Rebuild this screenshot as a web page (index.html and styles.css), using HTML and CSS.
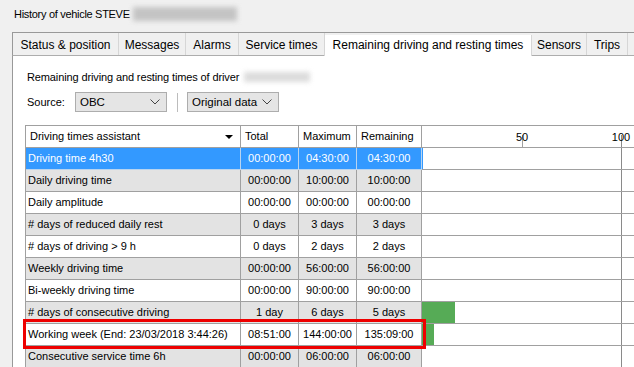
FILE: index.html
```html
<!DOCTYPE html>
<html>
<head>
<meta charset="utf-8">
<link rel="stylesheet" href="styles.css">
</head>
<body>
<div class="title">History of vehicle STEVE<span class="blur blur-title"></span></div>
<div class="tabctl">
  <div class="tabs">
    <div class="tab t1">Status &amp; position</div>
    <div class="tab t2">Messages</div>
    <div class="tab t3">Alarms</div>
    <div class="tab t4">Service times</div>
    <div class="tab t5 active">Remaining driving and resting times</div>
    <div class="tab t6">Sensors</div>
    <div class="tab t7">Trips</div>
  </div>
  <div class="panel">
    <div class="label">Remaining driving and resting times of driver<span class="blur blur-driver"></span></div>
    <div class="source-row">
      <span class="src-label">Source:</span>
      <div class="combo c1"><span>OBC</span><svg width="10" height="6" viewBox="0 0 10 6"><polyline points="0.5,0.5 5,5 9.5,0.5" fill="none" stroke="#444" stroke-width="1"/></svg></div>
      <div class="vsep"></div>
      <div class="combo c2"><span>Original data</span><svg width="10" height="6" viewBox="0 0 10 6"><polyline points="0.5,0.5 5,5 9.5,0.5" fill="none" stroke="#444" stroke-width="1"/></svg></div>
    </div>
    <div class="grid">
      <div class="c hd first">Driving times assistant<span class="tri"></span></div>
      <div class="c hd">Total</div>
      <div class="c hd">Maximum</div>
      <div class="c hd">Remaining</div>
      <div class="c hd chart-h"><span class="axl" style="left:100px">50</span><span class="axl" style="left:199px">100</span></div>

      <div class="c first sel">Driving time 4h30</div><div class="c num sel">00:00:00</div><div class="c num sel">04:30:00</div><div class="c num sel">04:30:00</div><div class="c chart selb"></div>

      <div class="c first g">Daily driving time</div><div class="c num g">00:00:00</div><div class="c num g">10:00:00</div><div class="c num g">10:00:00</div><div class="c chart"></div>

      <div class="c first">Daily amplitude</div><div class="c num">00:00:00</div><div class="c num">00:00:00</div><div class="c num">00:00:00</div><div class="c chart"></div>

      <div class="c first g"># days of reduced daily rest</div><div class="c num g">0 days</div><div class="c num g">3 days</div><div class="c num g">3 days</div><div class="c chart"></div>

      <div class="c first"># days of driving &gt; 9 h</div><div class="c num">0 days</div><div class="c num">2 days</div><div class="c num">2 days</div><div class="c chart"></div>

      <div class="c first g">Weekly driving time</div><div class="c num g">00:00:00</div><div class="c num g">56:00:00</div><div class="c num g">56:00:00</div><div class="c chart"></div>

      <div class="c first">Bi-weekly driving time</div><div class="c num">00:00:00</div><div class="c num">90:00:00</div><div class="c num">90:00:00</div><div class="c chart"></div>

      <div class="c first g"># days of consecutive driving</div><div class="c num g">1 day</div><div class="c num g">6 days</div><div class="c num g">5 days</div><div class="c chart"><div class="bar" style="width:33px"></div></div>

      <div class="c first">Working week (End: 23/03/2018 3:44:26)</div><div class="c num">08:51:00</div><div class="c num">144:00:00</div><div class="c num">135:09:00</div><div class="c chart"><div class="bar" style="width:12px"></div></div>

      <div class="c first g">Consecutive service time 6h</div><div class="c num g">00:00:00</div><div class="c num g">06:00:00</div><div class="c num g">06:00:00</div><div class="c chart"></div>

      <div class="highlight"></div>
    </div>
  </div>
</div>
</body>
</html>
```

FILE: styles.css
```css
html, body {
  margin: 0;
  padding: 0;
  width: 634px;
  height: 367px;
  overflow: hidden;
  background: #f0f0f0;
  font-family: "Liberation Sans", Arial, sans-serif;
  color: #000;
}

.title {
  height: 32px;
  box-sizing: border-box;
  padding: 6px 0 0 14px;
  font-size: 11px;
  letter-spacing: -0.3px;
  line-height: 16px;
  display: flex;
  align-items: flex-start;
}

.blur {
  display: inline-block;
  filter: blur(2.5px);
}

.blur-title {
  width: 104px;
  height: 14px;
  margin: 1px 0 0 3px;
  background: #c4c4c4;
}

.blur-driver {
  width: 66px;
  height: 10px;
  margin: 3px 0 0 5px;
  background: #dcdcdc;
}

.tabctl {
  margin-left: 12px;
  display: flex;
  flex-direction: column;
  height: 335px;
}

.tabs {
  display: flex;
  height: 24px;
  box-sizing: border-box;
  border-top: 1px solid #999;
  border-left: 1px solid #999;
  border-bottom: 1px solid #adadad;
  font-size: 12px;
}

.tab {
  box-sizing: border-box;
  height: 22px;
  padding-top: 3px;
  line-height: 19px;
  text-align: center;
  border-right: 1px solid #d6d6d6;
  background: #f0f0f0;
  white-space: nowrap;
}

.tab.active {
  background: #fff;
  margin-top: 2px;
  height: 21px;
  padding-top: 1px;
  border-left: 1px solid #d6d6d6;
  margin-left: -1px;
  position: relative;
}

.tab.active::after {
  content: "";
  position: absolute;
  left: 0;
  right: 0;
  bottom: -1px;
  height: 1px;
  background: #fff;
}

.t1 { width: 106px; }
.t2 { width: 67px; }
.t3 { width: 53px; }
.t4 { width: 86px; }
.t5 { width: 208px; }
.t6 { width: 55px; }
.t7 { width: 41px; }

.panel {
  flex: 1;
  background: #fff;
  border-left: 1px solid #999;
  padding: 13px 0 0 12px;
  font-size: 11px;
}

.label {
  height: 16px;
  line-height: 16px;
  padding-left: 2px;
  letter-spacing: -0.12px;
  display: flex;
  align-items: flex-start;
}

.source-row {
  margin-top: 7px;
  height: 20px;
  display: flex;
  align-items: center;
  padding-left: 2px;
}

.src-label {
  width: 48px;
}

.combo {
  box-sizing: border-box;
  height: 20px;
  width: 92px;
  background: #e5e5e5;
  border: 1px solid #adadad;
  display: flex;
  align-items: center;
  justify-content: space-between;
  padding: 0 6px 0 4px;
  font-size: 11.5px;
}

.vsep {
  width: 1px;
  height: 19px;
  background: #bcbcbc;
  margin: 0 9px 0 10px;
}

.grid {
  position: relative;
  margin-top: 13px;
  display: grid;
  grid-template-columns: 215px 58px 58px 65px 220px;
  grid-auto-rows: 22px;
  border-left: 1px solid #a0a0a0;
  border-top: 1px solid #a0a0a0;
  width: 616px;
}

.c {
  box-sizing: border-box;
  border-right: 1px solid #a0a0a0;
  border-bottom: 1px solid #a0a0a0;
  line-height: 21px;
  white-space: nowrap;
  overflow: hidden;
  background: #fff;
}

.first {
  padding-left: 2px;
}

.hd {
  padding-left: 4px;
  font-size: 11px;
}

.hd.first {
  padding-left: 4px;
  position: relative;
}

.tri {
  position: absolute;
  right: 7px;
  top: 9px;
  border-left: 4px solid transparent;
  border-right: 4px solid transparent;
  border-top: 4px solid #000;
}

.num {
  text-align: center;
}

.g {
  background: #e3e3e3;
}

.sel {
  background: #3399ff;
  color: #fff;
  border-right-color: #b8d4f0;
  border-bottom-color: #b8d4f0;
}

.chart {
  border-right: none;
  position: relative;
  background: linear-gradient(to right, transparent 199px, #8a8a8a 199px, #8a8a8a 200px, transparent 200px);
}

.selb {
  box-shadow: inset 1px 0 0 #3399ff;
}

.chart-h {
  border-right: none;
  position: relative;
  padding: 0;
  background:
    linear-gradient(to right, transparent 100px, #a0a0a0 100px, #a0a0a0 101px, transparent 101px) 0 100% / 100% 12px no-repeat,
    linear-gradient(to right, transparent 199px, #8a8a8a 199px, #8a8a8a 200px, transparent 200px) 0 100% / 100% 12px no-repeat,
    #fff;
}

.axl {
  position: absolute;
  top: 1px;
  transform: translateX(-50%);
  font-size: 11px;
}

.bar {
  height: 21px;
  background: #56ab56;
}

.highlight {
  position: absolute;
  left: -3px;
  top: 193px;
  width: 403px;
  height: 30px;
  box-sizing: border-box;
  border: 3px solid #ee0000;
  pointer-events: none;
}
```
